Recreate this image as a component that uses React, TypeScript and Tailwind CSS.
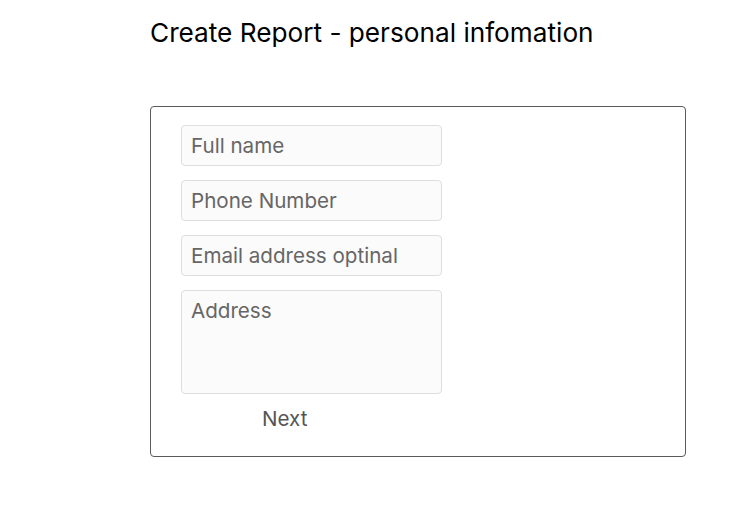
export default function App() {
  const fields = ['Full name', 'Phone Number', 'Email address optinal'];
  return (
    <div className="w-[744px] h-[529px] bg-white font-['Inter',sans-serif]">
      <div className="pl-[150px] pt-[16px]">
        <h1 className="text-[26.2px] leading-[34px] text-black">Create Report - personal infomation</h1>
        <div className="mt-[56px] w-[536px] h-[351px] border border-[#5a5a5a] rounded-[4px] pl-[30px] pt-[18px]">
          <div className="flex flex-col gap-[14px] w-[261px]">
            {fields.map((f) => (
              <input
                key={f}
                placeholder={f}
                className="h-[41px] w-full rounded-[4px] border border-[#dedede] bg-[#fbfbfb] px-[9px] text-[20.6px] placeholder:text-[#666] outline-none"
              />
            ))}
            <textarea
              placeholder="Address"
              className="h-[104px] w-full resize-none rounded-[4px] border border-[#dedede] bg-[#fbfbfb] px-[9px] pt-[6px] text-[20.6px] leading-[28px] placeholder:text-[#666] outline-none"
            />
          </div>
          <button className="ml-[81px] mt-[11px] text-[20.6px] leading-[28px] text-[#555]">Next</button>
        </div>
      </div>
    </div>
  );
}
